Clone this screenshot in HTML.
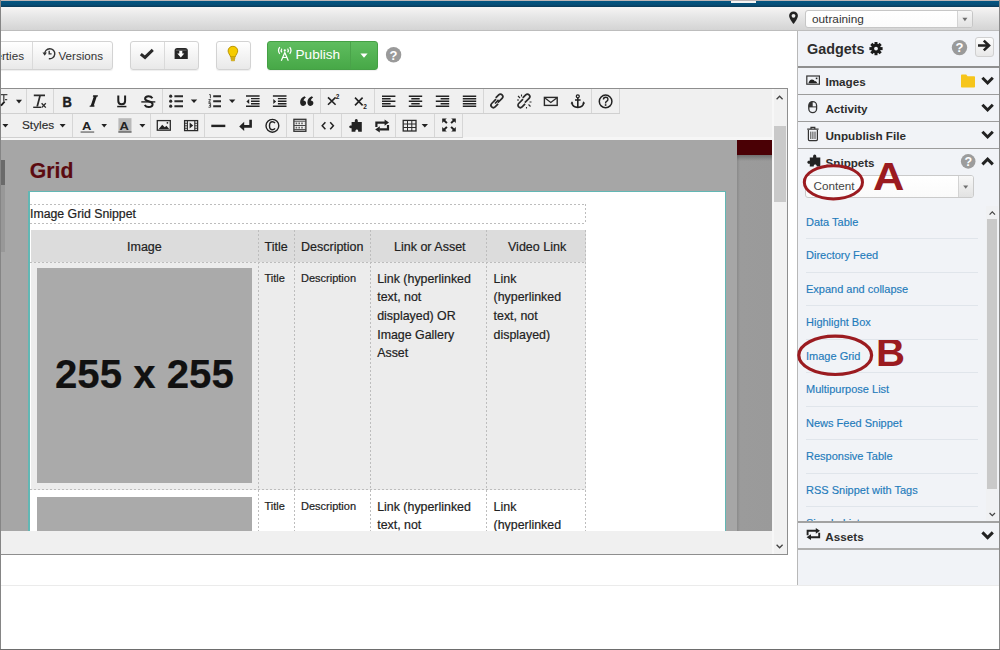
<!DOCTYPE html>
<html><head><meta charset="utf-8">
<style>
*{box-sizing:border-box;margin:0;padding:0}
html,body{width:1000px;height:650px;overflow:hidden;background:#fff;font-family:"Liberation Sans",sans-serif;color:#333}
.a{position:absolute}
.btn{position:absolute;top:41px;height:29px;border:1px solid #d3d3d3;border-radius:3px;background:linear-gradient(#ffffff,#e9e9e9);box-shadow:0 1px 1px rgba(0,0,0,.07)}
.t{position:absolute;white-space:nowrap;line-height:1}
.vs{position:absolute;width:1px;background:#d6d6d6}
.hs{position:absolute;height:1px;background:#d0d0d0}
#content .t,#content .a{-webkit-text-stroke:0.2px currentColor}
</style></head><body>
<!-- ===== top chrome ===== -->
<div class="a" style="left:0;top:0;width:1000px;height:1px;background:#bdb5b5"></div>
<div class="a" style="left:0;top:1px;width:1000px;height:6px;background:linear-gradient(#035682,#064e77 60%,#0b3a58)"></div>
<div class="a" style="left:731px;top:1px;width:25px;height:2px;background:#f4f4f4"></div>
<div class="a" style="left:0;top:7px;width:1000px;height:24px;background:linear-gradient(#f6f5f4,#e7e7e7 40%,#d4d4d4);border-bottom:1px solid #bdbdbd"></div>
<div class="a" style="left:805px;top:10px;width:168px;height:18px;border:1px solid #c6c6c6;border-radius:3px;background:linear-gradient(#fff,#fbfbfb)"></div>
<div class="a" style="left:957px;top:11px;width:15px;height:16px;border-left:1px solid #d3d3d3;background:linear-gradient(#f7f7f7,#e2e2e2);border-radius:0 2px 2px 0"></div>
<div class="t" style="left:812px;top:13.5px;font-size:11.8px;color:#333">outraining</div>

<!-- ===== buttons row ===== -->
<div class="btn" style="left:-30px;width:143px"></div>
<div class="vs" style="left:32px;top:42px;height:27px;background:#dadada"></div>
<div class="t" style="left:-29.3px;top:50px;font-size:11.7px">Properties</div>
<div class="t" style="left:58.5px;top:50px;font-size:11.6px">Versions</div>
<div class="btn" style="left:130px;width:69px"></div>
<div class="vs" style="left:164px;top:42px;height:27px;background:#dadada"></div>
<div class="btn" style="left:216px;width:35px"></div>
<div class="btn" style="left:267px;width:111px;border-color:#45a045;background:linear-gradient(#5fbd5f,#47a847)"></div>
<div class="vs" style="left:350px;top:42px;height:27px;background:#4aa34a"></div>
<div class="t" style="left:295.5px;top:48px;font-size:13.6px;color:#fff">Publish</div>

<!-- ===== editor frame ===== -->
<div class="a" style="left:-5px;top:88px;width:793px;height:467px;border:1px solid #8e8e8e;background:#f0f0f0"></div>
<!-- toolbar row lines -->
<div class="hs" style="left:0;top:113px;width:620px"></div>
<div class="a" style="left:0;top:137px;width:773px;height:3px;background:#f6f6f6"></div>
<div class="hs" style="left:0;top:137px;width:463px"></div>
<div class="vs" style="left:26px;top:89px;height:24px"></div>
<div class="vs" style="left:53px;top:89px;height:24px"></div>
<div class="vs" style="left:162px;top:89px;height:24px"></div>
<div class="vs" style="left:320px;top:89px;height:24px"></div>
<div class="vs" style="left:374px;top:89px;height:24px"></div>
<div class="vs" style="left:483px;top:89px;height:24px"></div>
<div class="vs" style="left:591px;top:89px;height:24px"></div>
<div class="vs" style="left:619px;top:89px;height:24px"></div>
<div class="vs" style="left:72px;top:114px;height:23px"></div>
<div class="vs" style="left:150px;top:114px;height:23px"></div>
<div class="vs" style="left:204px;top:114px;height:23px"></div>
<div class="vs" style="left:286px;top:114px;height:23px"></div>
<div class="vs" style="left:313px;top:114px;height:23px"></div>
<div class="vs" style="left:341px;top:114px;height:23px"></div>
<div class="vs" style="left:395px;top:114px;height:23px"></div>
<div class="vs" style="left:434px;top:114px;height:23px"></div>
<div class="vs" style="left:462px;top:114px;height:23px"></div>
<div class="t" style="left:22px;top:119.8px;font-size:11.8px;color:#2a2a2a;-webkit-text-stroke:0.15px #2a2a2a">Styles</div>

<!-- editor scrollbar -->
<div class="a" style="left:773px;top:89px;width:14px;height:465px;background:#f1f1f1"></div>
<div class="a" style="left:774px;top:125.5px;width:11.5px;height:76px;background:#c9c9c9"></div><div class="a" style="left:772px;top:89px;width:1.5px;height:465px;background:#f7f7f7"></div>

<!-- content -->
<div class="a" style="left:772px;top:140px;width:1px;height:391px;background:#f4f4f4"></div>
<div class="a" style="left:0;top:140px;width:772px;height:391px;background:#a6a6a6;overflow:hidden" id="content">
<div class="a" style="left:1px;top:20px;width:4px;height:25px;background:#6a6a6a"></div>
<div class="a" style="left:1px;top:45px;width:4px;height:67px;background:#989898"></div>
<div class="t" style="left:29.8px;top:20.2px;font-size:21.2px;font-weight:bold;color:#5b0a10">Grid</div>
<div class="a" style="left:737px;top:0;width:35px;height:15px;background:#4a0005"></div>
<div class="a" style="left:737px;top:15px;width:35px;height:376px;background:linear-gradient(90deg,#8a8a8a,#9b9b9b 3px,#9a9a9a)"></div><div class="a" style="left:737px;top:15px;width:35px;height:6px;background:linear-gradient(rgba(60,60,60,.45),rgba(60,60,60,0))"></div>
<div class="a" style="left:28px;top:51px;width:698px;height:400px;background:#fff;border:solid #62b7b4;border-width:1px 1px 0 2px"></div>
<div class="a" style="left:30px;top:64px;width:556px;height:1px;background:repeating-linear-gradient(90deg,#bdbdbd 0 2px,transparent 2px 4px)"></div><div class="a" style="left:30px;top:83px;width:556px;height:1px;background:repeating-linear-gradient(90deg,#bdbdbd 0 2px,transparent 2px 4px)"></div><div class="a" style="left:585px;top:64px;width:1px;height:20px;background:repeating-linear-gradient(180deg,#bdbdbd 0 2px,transparent 2px 4px)"></div>
<div class="t" style="left:30px;top:68px;font-size:12.3px;color:#222">Image Grid Snippet</div>
<div class="a" style="left:31px;top:90px;width:555px;height:32px;background:#dcdcdc"></div>
<div class="a" style="left:31px;top:122px;width:555px;height:228px;background:#ececec"></div>
<div class="a" style="left:31px;top:350px;width:555px;height:60px;background:#fff"></div>
<div class="a" style="left:30px;top:122px;width:556px;height:1px;background:repeating-linear-gradient(90deg,#bdbdbd 0 2px,transparent 2px 4px)"></div>
<div class="a" style="left:30px;top:349px;width:556px;height:1px;background:repeating-linear-gradient(90deg,#bdbdbd 0 2px,transparent 2px 4px)"></div>
<div class="a" style="left:258px;top:90px;width:1px;height:320px;background:repeating-linear-gradient(180deg,#bdbdbd 0 2px,transparent 2px 4px)"></div>
<div class="a" style="left:294px;top:90px;width:1px;height:320px;background:repeating-linear-gradient(180deg,#bdbdbd 0 2px,transparent 2px 4px)"></div>
<div class="a" style="left:370px;top:90px;width:1px;height:320px;background:repeating-linear-gradient(180deg,#bdbdbd 0 2px,transparent 2px 4px)"></div>
<div class="a" style="left:486px;top:90px;width:1px;height:320px;background:repeating-linear-gradient(180deg,#bdbdbd 0 2px,transparent 2px 4px)"></div>
<div class="a" style="left:585px;top:90px;width:1px;height:320px;background:repeating-linear-gradient(180deg,#bdbdbd 0 2px,transparent 2px 4px)"></div>
<div class="a" style="left:37px;top:128px;width:215px;height:215px;background:#aaaaaa"></div>
<div class="a" style="left:37px;top:357px;width:215px;height:100px;background:#aaaaaa"></div>
<div class="t" style="left:55px;top:214.8px;font-size:40.2px;font-weight:bold;color:#111">255 x 255</div>
<div class="t" style="left:127px;top:101px;font-size:12.5px;color:#222">Image</div>
<div class="t" style="left:264.5px;top:101px;font-size:12.5px;color:#222">Title</div>
<div class="t" style="left:301px;top:101px;font-size:12.5px;color:#222">Description</div>
<div class="t" style="left:394px;top:101px;font-size:12.5px;color:#222">Link or Asset</div>
<div class="t" style="left:508px;top:101px;font-size:12.5px;color:#222">Video Link</div>
<div class="t" style="left:264.5px;top:133px;font-size:11px;color:#222">Title</div>
<div class="t" style="left:301px;top:133px;font-size:11px;color:#222">Description</div>
<div class="a" style="left:377.2px;top:129.5px;font-size:12.4px;line-height:18.7px;color:#222;width:110px">Link (hyperlinked<br>text, not<br>displayed) OR<br>Image Gallery<br>Asset</div>
<div class="a" style="left:493.6px;top:129.5px;font-size:12.4px;line-height:18.7px;color:#222;width:95px">Link<br>(hyperlinked<br>text, not<br>displayed)</div>
<div class="t" style="left:264.5px;top:361px;font-size:11px;color:#222">Title</div>
<div class="t" style="left:301px;top:361px;font-size:11px;color:#222">Description</div>
<div class="a" style="left:377.2px;top:357.5px;font-size:12.4px;line-height:18.7px;color:#222;width:110px">Link (hyperlinked<br>text, not</div>
<div class="a" style="left:493.6px;top:357.5px;font-size:12.4px;line-height:18.7px;color:#222;width:95px">Link<br>(hyperlinked</div>
</div>

<!-- ===== right panel ===== -->
<div class="a" style="left:797px;top:31px;width:202px;height:554px;background:#f1f3f7;border-left:1px solid #b8b8b8"></div>

<div class="t" style="left:807px;top:42px;font-size:14.4px;font-weight:bold;color:#2d2d2d">Gadgets</div>
<div class="a" style="left:975px;top:37px;width:19px;height:20px;border:1px solid #d0d0d0;border-radius:3px;background:linear-gradient(#fdfdfd,#e8e8e8)"></div>
<div class="a" style="left:798px;top:66px;width:201px;height:2px;background:#8f8f8f"></div>
<div class="t" style="left:825.4px;top:76.3px;font-size:11.7px;font-weight:bold;color:#2d2d2d">Images</div>
<div class="a" style="left:798px;top:94px;width:201px;height:1px;background:#9c9c9c"></div>
<div class="t" style="left:825.4px;top:103.3px;font-size:11.7px;font-weight:bold;color:#2d2d2d">Activity</div>
<div class="a" style="left:798px;top:121px;width:201px;height:1px;background:#9c9c9c"></div>
<div class="t" style="left:825.4px;top:130.3px;font-size:11.7px;font-weight:bold;color:#2d2d2d">Unpublish File</div>
<div class="a" style="left:798px;top:148px;width:201px;height:1px;background:#9c9c9c"></div>
<div class="t" style="left:825.6px;top:157px;font-size:11.6px;font-weight:bold;color:#2d2d2d">Snippets</div>
<div class="a" style="left:805px;top:175px;width:169px;height:23px;border:1px solid #cacaca;border-radius:3px;background:linear-gradient(#fff,#fafafa)"></div>
<div class="a" style="left:958px;top:176px;width:15px;height:21px;border-left:1px solid #d3d3d3;background:linear-gradient(#f8f8f8,#e2e2e2);border-radius:0 2px 2px 0"></div>
<div class="t" style="left:813.5px;top:180px;font-size:11.7px;color:#444">Content</div>
<div class="a" style="left:798px;top:204px;width:201px;height:318px;overflow:hidden">
  <div class="a" style="left:8px;top:1.6px;font-size:11px;line-height:33.5px;color:#1f7bbb;width:175px;-webkit-text-stroke:0.15px currentColor" id="snips">
  Data Table<br>Directory Feed<br>Expand and collapse<br>Highlight Box<br>Image Grid<br>Multipurpose List<br>News Feed Snippet<br>Responsive Table<br>RSS Snippet with Tags<br>Simple List
  </div>
</div>
<div class="a" style="left:986px;top:206px;width:12px;height:315px;background:#f0f1f3"></div>
<div class="a" style="left:987px;top:219px;width:10px;height:270px;background:#c9c9c9"></div>
<div class="a" style="left:798px;top:521px;width:201px;height:2px;background:#a2a2a2"></div>
<div class="t" style="left:825.3px;top:530.5px;font-size:11.7px;font-weight:bold;color:#2d2d2d">Assets</div>
<div class="a" style="left:798px;top:548px;width:201px;height:2px;background:#b0b0b0"></div>
<div class="t" style="left:873.4px;top:157.5px;font-size:38.5px;font-weight:bold;color:#9b1b20;transform:scaleX(1.13);transform-origin:0 0">A</div>
<div class="t" style="left:876px;top:333.2px;font-size:39px;font-weight:bold;color:#9b1b20;transform:scaleX(1.03);transform-origin:0 0">B</div>
<div class="a" style="left:806px;top:238.0px;width:172px;height:1px;background:#e0e5eb"></div>
<div class="a" style="left:806px;top:271.5px;width:172px;height:1px;background:#e0e5eb"></div>
<div class="a" style="left:806px;top:305.0px;width:172px;height:1px;background:#e0e5eb"></div>
<div class="a" style="left:806px;top:338.5px;width:172px;height:1px;background:#e0e5eb"></div>
<div class="a" style="left:806px;top:372.0px;width:172px;height:1px;background:#e0e5eb"></div>
<div class="a" style="left:806px;top:405.5px;width:172px;height:1px;background:#e0e5eb"></div>
<div class="a" style="left:806px;top:439.0px;width:172px;height:1px;background:#e0e5eb"></div>
<div class="a" style="left:806px;top:472.5px;width:172px;height:1px;background:#e0e5eb"></div>
<div class="a" style="left:806px;top:506.0px;width:172px;height:1px;background:#e0e5eb"></div>
<div class="a" style="left:0;top:585px;width:999px;height:1px;background:#ebebeb"></div>

<!-- frame -->
<div class="a" style="left:0;top:0;width:1px;height:650px;background:#858585"></div>
<div class="a" style="left:999px;top:0;width:1px;height:650px;background:#8a8a8a"></div>
<div class="a" style="left:0;top:649px;width:1000px;height:1px;background:#6d6d6d"></div>

<!-- ===== icons overlay ===== -->
<svg class="a" style="left:0;top:0" width="1000" height="650" viewBox="0 0 1000 650">
<g id="icons" fill="#2b2b2b">
<!-- top pin -->
<path d="M793.5 11.5c-2.6 0-4.4 1.9-4.4 4.3 0 2.9 4.4 8.3 4.4 8.3s4.4-5.4 4.4-8.3c0-2.4-1.8-4.3-4.4-4.3z" fill="#222"/><circle cx="793.5" cy="15.8" r="1.9" fill="#ececec"/>
<path d="M962.4 17.8h5l-2.5 3.4z" fill="#6e6e6e"/>
<!-- history -->
<g fill="none" stroke="#333" stroke-width="1.4"><path d="M44.8 54.3 A5 5 0 1 1 48.8 58.6"/><path d="M49.2 50.8v3.1h2.4"/></g>
<path d="M42.5 52.6h4.4l-2.2 3.2z" fill="#333"/>
<!-- check -->
<path d="M140.8 54.1l4.2 3.3 7.8-7.5" fill="none" stroke="#2a2a2a" stroke-width="3" stroke-linejoin="miter"/>
<!-- archive -->
<path d="M174.6 50.5q0-2.6 2.6-2.6h8q2.6 0 2.6 2.6v8.6h-13.2z" fill="#262626"/>
<path d="M179.3 50.8h3v2.8h2l-3.5 3.8-3.5-3.8h2z" fill="#fff"/>
<path d="M175.8 50.2h10.8" stroke="#777" stroke-width="0.8"/>
<!-- bulb -->
<path d="M232.9 46.3c-2.7 0-4.8 2-4.8 4.6 0 2.3 1.8 3.6 2.5 6h4.6c.7-2.4 2.5-3.7 2.5-6 0-2.6-2.1-4.6-4.8-4.6z" fill="#f6cc00" stroke="#b38f00" stroke-width="0.9"/>
<path d="M230.9 57.2h4v1.6h-4zM231.3 59.2h3.2v1.6h-3.2z" fill="#f2c500" stroke="#b38f00" stroke-width="0.6"/>
<!-- antenna -->
<g fill="none" stroke="#fff" stroke-width="1.2"><path d="M279.8 47.2q-2.6 3.3 0 6.6M281.9 48.6q-1.5 1.9 0 3.8M289.7 47.2q2.6 3.3 0 6.6M287.6 48.6q1.5 1.9 0 3.8"/><path d="M281.3 60.8l3.5-8.3 3.5 8.3M282.8 57.5h4"/></g>
<circle cx="284.8" cy="50.4" r="1.1" fill="#fff"/>
<path d="M360.4 53.6h7.2l-3.6 4.2z" fill="#fff"/>
<!-- help btn row -->
<circle cx="393.6" cy="54.8" r="7.7" fill="#9a9a9a"/>
<text x="393.6" y="59.6" font-family="Liberation Sans" font-weight="bold" font-size="13" fill="#fff" text-anchor="middle">?</text>

<!-- ===== editor toolbar row1 ===== -->
<path d="M1 94.7h6.4M3.8 95v6.2M5 99.6h2.2" stroke="#444" stroke-width="1.3" fill="none"/><path d="M4.6 101.6l-3.6 4" stroke="#1a1a1a" stroke-width="1.8"/>
<path d="M16 99.8h6l-3 3.6z" fill="#222"/>
<!-- Tx -->
<path d="M33.8 94.6h11.2v1.6h-4.2l-2.7 10.2h-1.8l2.7-10.2h-5.2z" fill="#2a2a2a"/>
<path d="M33.2 106.6h7.8v1.4h-7.8z" fill="#2a2a2a"/>
<path d="M41.6 103.2l4.2 4.4M45.8 103.2l-4.2 4.4" stroke="#2a2a2a" stroke-width="1.3"/>
<text x="62.6" y="106.8" font-family="Liberation Sans" font-weight="bold" font-size="15" fill="#1e1e1e" stroke="#1e1e1e" stroke-width="0.5" transform="translate(62.6 0) scale(0.86 1) translate(-62.6 0)">B</text>
<path d="M93.2 95.3h4.8l-.4 1.4h-.9l-2.9 8.7h.9l-.4 1.4h-4.8l.4-1.4h.9l2.9-8.7h-.9z" fill="#1e1e1e"/><path d="M95 96.5l-3.2 9.6" stroke="#1e1e1e" stroke-width="1.2"/>
<!-- U -->
<path d="M118.3 95.6v5.4q0 3.2 3.4 3.2t3.4-3.2v-5.4" fill="none" stroke="#1e1e1e" stroke-width="2"/>
<path d="M117.2 105.8h9.2v1.5h-9.2z" fill="#1e1e1e"/>
<!-- S -->
<path d="M152.4 98.2q-1.2-2-3.8-2-3.5 0-3.5 2.5 0 1.7 3.6 2.5 3.9.9 3.9 3.1 0 2.8-3.9 2.8-2.7 0-4-2.1" fill="none" stroke="#1e1e1e" stroke-width="2"/>
<path d="M141.3 101.2h14v1.4h-14z" fill="#222"/>
<!-- bullet list -->
<circle cx="170.7" cy="96.2" r="1.6"/><circle cx="170.7" cy="101.2" r="1.6"/><circle cx="170.7" cy="106.2" r="1.6"/>
<path d="M174.4 95.3h8.6v1.9h-8.6zM174.4 100.3h8.6v1.9h-8.6zM174.4 105.3h8.6v1.9h-8.6z"/>
<path d="M190.8 99.4h6.4l-3.2 3.6z" fill="#222"/>
<!-- numbered list -->
<path d="M209.2 94.6h1.2v3.6M208.5 99.6h2.1l-1.9 2.6h2.1M208.5 103.4h2.1v3.8h-2.1M209 105.3h1.6" stroke="#333" stroke-width="0.9" fill="none"/>
<path d="M213.2 95.3h7.8v1.9h-7.8zM213.2 100.3h7.8v1.9h-7.8zM213.2 105.3h7.8v1.9h-7.8z"/>
<path d="M229 99.4h6.4l-3.2 3.6z" fill="#222"/>
<!-- outdent -->
<path d="M246 95.3h13.6v1.5h-13.6zM251 97.9h8.6v1.4h-8.6zM251 100.5h8.6v1.4h-8.6zM251 103.1h8.6v1.4h-8.6zM246 105.6h13.6v1.5h-13.6zM249.2 98.9v5l-2.8-2.5z" fill="#222"/>
<path d="M272.9 95.3h13.6v1.5h-13.6zM277.9 97.9h8.6v1.4h-8.6zM277.9 100.5h8.6v1.4h-8.6zM277.9 103.1h8.6v1.4h-8.6zM272.9 105.6h13.6v1.5h-13.6zM273.29999999999995 98.9v5l2.8-2.5z" fill="#222"/>
<!-- quote 66 -->
<path d="M304.5 96.2c-2.6.9-4.4 3-4.4 6 0 2.2 1.3 3.7 3.2 3.7 1.6 0 2.8-1.2 2.8-2.8 0-1.6-1.1-2.7-2.6-2.7.4-1.3 1.3-2.2 2.4-2.9zM311.8 96.2c-2.6.9-4.4 3-4.4 6 0 2.2 1.3 3.7 3.2 3.7 1.6 0 2.8-1.2 2.8-2.8 0-1.6-1.1-2.7-2.6-2.7.4-1.3 1.3-2.2 2.4-2.9z" fill="#222"/>
<!-- superscript -->
<path d="M328 97.4l7.6 7.4M335.6 97.4l-7.6 7.4" stroke="#222" stroke-width="1.6"/>
<text x="335.8" y="98.6" font-family="Liberation Sans" font-size="6.5" font-weight="bold" fill="#222">2</text>
<path d="M355 97.6l7.6 7.8M362.6 97.6l-7.6 7.8" stroke="#222" stroke-width="1.6"/>
<text x="363.2" y="108.6" font-family="Liberation Sans" font-size="6.5" font-weight="bold" fill="#222">2</text>
<!-- align -->
<path d="M382 95.6h13.4v1.45h-13.4zM382 98.1h8.6v1.45h-8.6zM382 100.6h13.4v1.45h-13.4zM382 103.1h8.6v1.45h-8.6zM382 105.6h13.4v1.45h-13.4z" fill="#222"/>
<path d="M408.8 95.6h13.4v1.45h-13.4zM411.3 98.1h8.4v1.45h-8.4zM408.8 100.6h13.4v1.45h-13.4zM411.3 103.1h8.4v1.45h-8.4zM408.8 105.6h13.4v1.45h-13.4z" fill="#222"/>
<path d="M435.8 95.6h13.4v1.45h-13.4zM440.6 98.1h8.6v1.45h-8.6zM435.8 100.6h13.4v1.45h-13.4zM440.6 103.1h8.6v1.45h-8.6zM435.8 105.6h13.4v1.45h-13.4z" fill="#222"/>
<path d="M462.8 95.6h13.4v1.45h-13.4zM462.8 98.1h13.4v1.45h-13.4zM462.8 100.6h13.4v1.45h-13.4zM462.8 103.1h13.4v1.45h-13.4zM462.8 105.6h13.4v1.45h-13.4z" fill="#222"/>
<!-- link -->
<g fill="none" stroke="#2a2a2a" stroke-width="1.7"><path d="M496 99.2l-4.3 4.3a2.4 2.4 0 0 0 3.4 3.4l3-3"/><path d="M497.8 102.6l4.3-4.3a2.4 2.4 0 0 0-3.4-3.4l-3 3"/><path d="M495 103.5l3.6-3.6"/></g>
<g fill="none" stroke="#2a2a2a" stroke-width="1.7"><path d="M523 99.2l-4.3 4.3a2.4 2.4 0 0 0 3.4 3.4l3-3"/><path d="M524.8 102.6l4.3-4.3a2.4 2.4 0 0 0-3.4-3.4l-3 3"/></g>
<path d="M518 96l2 2M528.5 104.5l2 2M521.5 94.6v2M517 100h2M526.5 107v1.6M529.5 102h2" stroke="#2a2a2a" stroke-width="1.1"/>
<!-- mail -->
<rect x="544.4" y="97.4" width="12.8" height="8" fill="none" stroke="#2a2a2a" stroke-width="1.4"/>
<path d="M544.6 97.8l6.2 4.6 6.2-4.6" fill="none" stroke="#2a2a2a" stroke-width="1.3"/>
<!-- anchor -->
<circle cx="577.8" cy="96.3" r="1.5" fill="none" stroke="#222" stroke-width="1.3"/>
<path d="M577.8 97.8v9.4M575 100h5.6" stroke="#222" stroke-width="1.6"/>
<path d="M571.8 102.6q.6 4.6 6 4.8 5.4-.2 6-4.8" fill="none" stroke="#222" stroke-width="1.6"/>
<path d="M570.6 103.4l1.4-2.2 1.4 2.2zM582.2 103.4l1.4-2.2 1.4 2.2z" fill="#222"/>
<!-- help -->
<circle cx="605.6" cy="101.4" r="6.3" fill="none" stroke="#222" stroke-width="1.5"/>
<path d="M603.4 99.6q0-2.3 2.3-2.3t2.2 2.1q0 1.3-1.4 2-.9.5-.9 1.6v.4" fill="none" stroke="#222" stroke-width="1.4"/>
<rect x="604.8" y="104.2" width="1.6" height="1.6" fill="#222"/>

<!-- ===== editor toolbar row2 ===== -->
<path d="M2.4 124h6l-3 3.5z" fill="#222"/>
<path d="M59.6 124h6l-3 3.5z" fill="#222"/>
<text x="82" y="129.6" font-family="Liberation Sans" font-weight="bold" font-size="11.6" fill="#222" transform="translate(82 0) scale(1.12 1) translate(-82 0)">A</text>
<rect x="80.6" y="131.4" width="13.6" height="1.3" fill="#6a6a6a"/>
<path d="M101.4 124h5.6l-2.8 3.5z" fill="#222"/>
<rect x="118.4" y="118.2" width="13.1" height="14.4" fill="#b9b9b9"/>
<text x="119.6" y="129.6" font-family="Liberation Sans" font-weight="bold" font-size="11.6" fill="#222" transform="translate(119.6 0) scale(1.12 1) translate(-119.6 0)">A</text>
<rect x="118.4" y="131.2" width="13.1" height="1.5" fill="#6e6e6e"/>
<path d="M139.4 124h6l-3 3.5z" fill="#222"/>
<!-- image -->
<rect x="157.3" y="120.6" width="13" height="9.6" fill="none" stroke="#2a2a2a" stroke-width="1.3"/>
<path d="M158.6 129.2l3.6-4.4 2.6 2.4 1.6-1.4 3 3.4z" fill="#222"/><circle cx="167.4" cy="122.8" r="0.9" fill="#222"/>
<!-- film -->
<rect x="184.6" y="120.6" width="13" height="10" fill="none" stroke="#2a2a2a" stroke-width="1.3"/>
<path d="M187.4 120.6v10M194.8 120.6v10" stroke="#2a2a2a" stroke-width="1.1"/>
<path d="M184.6 123.3h2.8M184.6 125.8h2.8M184.6 128.3h2.8M194.8 123.3h2.8M194.8 125.8h2.8M194.8 128.3h2.8" stroke="#2a2a2a" stroke-width="0.9"/>
<path d="M189.6 122.6v6l3.6-3z" fill="#222"/>
<!-- hr -->
<rect x="211.3" y="124.7" width="14" height="2.4" fill="#222"/>
<!-- enter -->
<path d="M250.6 119.8v6.6h-7" fill="none" stroke="#222" stroke-width="2.6"/>
<path d="M239.2 126.4l5-4.6v9.2z" fill="#222"/>
<!-- copyright -->
<circle cx="272.4" cy="125.8" r="6.4" fill="none" stroke="#222" stroke-width="1.4"/>
<path d="M275 123.2q-.9-1.4-2.6-1.4-2.9 0-2.9 4t2.9 4q1.7 0 2.6-1.4" fill="none" stroke="#222" stroke-width="1.4"/>
<!-- template -->
<rect x="293.9" y="119.3" width="12" height="12" fill="none" stroke="#333" stroke-width="1.3"/>
<path d="M293.9 121.2h12M293.9 125.5h12M293.9 129.6h12" stroke="#444" stroke-width="1"/>
<path d="M295.6 123.4h8.6M295.6 127.6h8.6" stroke="#666" stroke-width="1.6" stroke-dasharray="1.6 1.2"/>
<!-- code -->
<path d="M325.4 122.2l-3.2 3.5 3.2 3.5M330.2 122.2l3.2 3.5-3.2 3.5" fill="none" stroke="#222" stroke-width="1.5"/>
<!-- puzzle -->
<path d="M351.6 122h3.2v-1.2c0-1.1.6-1.9 1.5-1.9s1.5.8 1.5 1.9v1.2h4v9.7h-3.6v-.6c0-.9-.6-1.5-1.4-1.5s-1.4.6-1.4 1.5v.6h-3.8v-3.5h-.8c-.9 0-1.6-.6-1.6-1.4s.7-1.4 1.6-1.4h.8z" fill="#222"/>
<!-- repeat -->
<path d="M376.4 127v-4.4h8.6M388 125v4.4h-8.6" fill="none" stroke="#222" stroke-width="2.2"/>
<path d="M384.6 119.5l4.4 3.1-4.4 3.1zM379.8 126.3l-4.6 3.1 4.6 3.1z" fill="#222"/>
<!-- table -->
<rect x="403.2" y="120.4" width="12.8" height="10.6" fill="none" stroke="#2a2a2a" stroke-width="1.3"/>
<path d="M403.2 124h12.8M403.2 127.5h12.8M407.5 120.4v10.6M411.8 120.4v10.6" stroke="#2a2a2a" stroke-width="1"/>
<path d="M421.6 124h6.4l-3.2 3.5z" fill="#222"/>
<!-- maximize -->
<path d="M442.2 118.4h4.6l-1.6 1.6 2.4 2.4-1.4 1.4-2.4-2.4-1.6 1.6zM455.8 118.4v4.6l-1.6-1.6-2.4 2.4-1.4-1.4 2.4-2.4-1.6-1.6zM442.2 131.6v-4.6l1.6 1.6 2.4-2.4 1.4 1.4-2.4 2.4 1.6 1.6zM455.8 131.6h-4.6l1.6-1.6-2.4-2.4 1.4-1.4 2.4 2.4 1.6-1.6z" fill="#222"/>
<!-- editor scroll arrows -->
<path d="M776.6 99.2l3-3 3 3M776.6 544.8l3 3 3-3" fill="none" stroke="#444" stroke-width="1.3"/>

<!-- ===== panel icons ===== -->
<!-- gear -->
<g transform="translate(876 48.6)"><circle r="4.8" fill="#1a1a1a"/><g fill="#1a1a1a"><rect x="-1.5" y="-6.6" width="3" height="13.2"/><rect x="-1.5" y="-6.6" width="3" height="13.2" transform="rotate(45)"/><rect x="-1.5" y="-6.6" width="3" height="13.2" transform="rotate(90)"/><rect x="-1.5" y="-6.6" width="3" height="13.2" transform="rotate(135)"/></g><circle r="1.9" fill="#f1f3f7"/></g>
<circle cx="959.5" cy="47.6" r="7.7" fill="#9a9a9a"/>
<text x="959.5" y="52.4" font-family="Liberation Sans" font-weight="bold" font-size="13" fill="#fff" text-anchor="middle">?</text>
<path d="M978 45.5h10.2M983.8 40.6l5.2 4.9-5.2 4.9" fill="none" stroke="#222" stroke-width="2.6"/>
<!-- images icon -->
<rect x="806.8" y="76" width="12.6" height="8.2" fill="none" stroke="#333" stroke-width="1.2"/>
<path d="M808.4 83.2q1-3.6 3.6-3.8 2 .1 3 2.2l.8-.6 1.6 2.2z" fill="#222"/><rect x="815.8" y="77.6" width="1.6" height="1.6" fill="#222"/>
<!-- folder -->
<path d="M961 75.4q0-.8.8-.8h4.4l1.4 1.6h6.6q.8 0 .8.8v9.8q0 .8-.8.8h-12.4q-.8 0-.8-.8z" fill="#f6c51b"/>
<!-- chevrons -->
<path d="M982.4 77.8l5.2 5.2 5.2-5.2M982.4 104.8l5.2 5.2 5.2-5.2M982.4 131.8l5.2 5.2 5.2-5.2M982.4 532.4l5.2 5.2 5.2-5.2" fill="none" stroke="#222" stroke-width="3"/>
<path d="M982.4 164.4l5.2-5.2 5.2 5.2" fill="none" stroke="#222" stroke-width="3"/>
<!-- mouse -->
<rect x="808.8" y="101.6" width="7.8" height="11" rx="3.9" fill="none" stroke="#333" stroke-width="1.3"/>
<path d="M812.7 101.6a3.9 3.9 0 0 0-3.9 3.9v1.4h3.9z" fill="#333"/><path d="M808.8 106.9h7.8" stroke="#333" stroke-width="1"/>
<!-- trash -->
<path d="M807.2 129.2h11.4M811 129v-1.6h3.8v1.6" fill="none" stroke="#333" stroke-width="1.2"/>
<path d="M808.4 130v9.6q0 1 1 1h7q1 0 1-1v-9.6" fill="none" stroke="#333" stroke-width="1.2"/>
<path d="M810.8 131.6v7.4M812.9 131.6v7.4M815 131.6v7.4" stroke="#333" stroke-width="0.9"/>
<!-- puzzle2 -->
<path d="M809.8 157.4h3.3v-1.1c0-1.1.7-1.9 1.6-1.9s1.6.8 1.6 1.9v1.1h4v9.2h-3.6v-.5c0-.9-.6-1.5-1.5-1.5s-1.5.6-1.5 1.5v.5h-3.9v-2.8h-.9c-.9 0-1.6-.7-1.6-1.5s.7-1.5 1.6-1.5h.9z" fill="#222"/>
<circle cx="968.2" cy="161.4" r="7.3" fill="#9c9c9c"/>
<text x="968.2" y="166" font-family="Liberation Sans" font-weight="bold" font-size="12.5" fill="#fff" text-anchor="middle">?</text>
<path d="M963.2 185.4h5l-2.5 3.4z" fill="#6e6e6e"/>
<!-- list scroll arrows -->
<path d="M989.6 214.6l2.7-2.7 2.7 2.7M989.6 513l2.7 2.7 2.7-2.7" fill="none" stroke="#444" stroke-width="1.2"/>
<!-- assets repeat -->
<path d="M807.6 535.2v-4.4h8.6M819.2 532.8v4.4h-8.6" fill="none" stroke="#222" stroke-width="1.9"/>
<path d="M815.8 527.9l4.2 2.9-4.2 2.9zM811 534.3l-4.4 2.9 4.4 2.9z" fill="#222"/>
<!-- red ellipses -->
<ellipse cx="833.4" cy="182.3" rx="29.1" ry="16.6" fill="none" stroke="#9b1b20" stroke-width="3"/>
<ellipse cx="835.2" cy="355.3" rx="36.4" ry="19.2" fill="none" stroke="#9b1b20" stroke-width="3.2"/>
</g>
</svg>
</body></html>
